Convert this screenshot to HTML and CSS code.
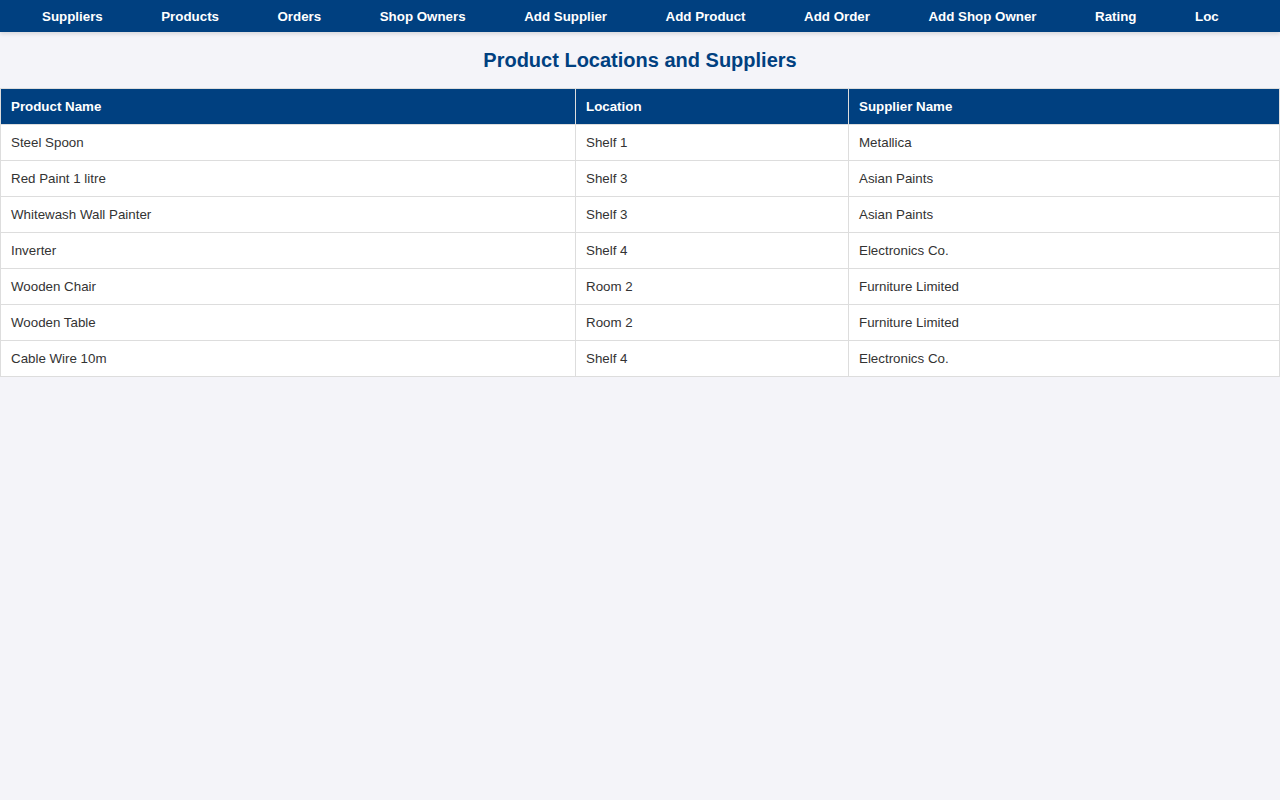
FILE: index.html
```html
<!DOCTYPE html>
<html lang="en">
<head>
<meta charset="utf-8">
<title>Product Locations and Suppliers</title>
<link rel="stylesheet" href="styles.css">
</head>
<body>
<nav class="navbar">
  <a href="#">Suppliers</a>
  <a href="#">Products</a>
  <a href="#">Orders</a>
  <a href="#">Shop Owners</a>
  <a href="#">Add Supplier</a>
  <a href="#">Add Product</a>
  <a href="#">Add Order</a>
  <a href="#">Add Shop Owner</a>
  <a href="#">Rating</a>
  <a href="#">Loc</a>
</nav>
<main>
  <h2 class="title">Product Locations and Suppliers</h2>
  <table class="data">
    <thead>
      <tr><th class="c1">Product Name</th><th class="c2">Location</th><th class="c3">Supplier Name</th></tr>
    </thead>
    <tbody>
      <tr><td>Steel Spoon</td><td>Shelf 1</td><td>Metallica</td></tr>
      <tr><td>Red Paint 1 litre</td><td>Shelf 3</td><td>Asian Paints</td></tr>
      <tr><td>Whitewash Wall Painter</td><td>Shelf 3</td><td>Asian Paints</td></tr>
      <tr><td>Inverter</td><td>Shelf 4</td><td>Electronics Co.</td></tr>
      <tr><td>Wooden Chair</td><td>Room 2</td><td>Furniture Limited</td></tr>
      <tr><td>Wooden Table</td><td>Room 2</td><td>Furniture Limited</td></tr>
      <tr><td>Cable Wire 10m</td><td>Shelf 4</td><td>Electronics Co.</td></tr>
    </tbody>
  </table>
</main>
</body>
</html>
```

FILE: styles.css
```css
* { box-sizing: border-box; }
html, body {
  margin: 0;
  padding: 0;
  background: #f4f4f9;
  font-family: "Liberation Sans", Arial, sans-serif;
}
.navbar {
  display: flex;
  align-items: center;
  height: 32px;
  background: #004080;
  padding-left: 42px;
  gap: 58.5px;
  box-shadow: 0 2px 4px rgba(0, 0, 0, 0.12);
  white-space: nowrap;
  overflow: hidden;
}
.navbar a {
  color: #ffffff;
  text-decoration: none;
  font-weight: bold;
  font-size: 13.33px;
}
.title {
  margin: 17px 0 16px;
  text-align: center;
  color: #004080;
  font-size: 20px;
  line-height: 23px;
}
.data {
  width: 100%;
  border-collapse: collapse;
  background: #ffffff;
  font-size: 13.33px;
}
.data th, .data td {
  border: 1px solid #dddddd;
  padding: 10px;
  text-align: left;
  line-height: 15px;
}
.data th {
  background: #004080;
  color: #ffffff;
  font-weight: bold;
}
.data td { color: #333333; }
.c1 { width: 575px; }
.c2 { width: 273px; }
```
